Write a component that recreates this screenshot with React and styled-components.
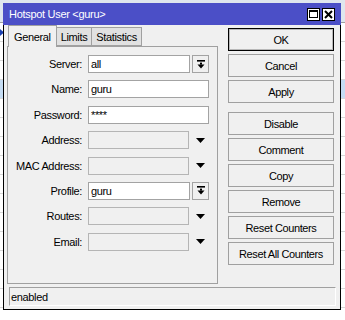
import styled, { createGlobalStyle } from "styled-components";

const GlobalStyle = createGlobalStyle`
  html, body {
    margin: 0;
    padding: 0;
    background: #f0f0f0;
  }
  body {
    font-family: "Liberation Sans", Arial, sans-serif;
    font-size: 11px;
    letter-spacing: -0.35px;
    color: #000;
  }
`;

const fields = [
  { label: "Server:", value: "all", kind: "combo" },
  { label: "Name:", value: "guru", kind: "text" },
  { label: "Password:", value: "****", kind: "text" },
  { label: "Address:", kind: "off" },
  { label: "MAC Address:", kind: "off" },
  { label: "Profile:", value: "guru", kind: "combo" },
  { label: "Routes:", kind: "off" },
  { label: "Email:", kind: "off" },
];

const buttons = [
  { text: "OK", main: true },
  { text: "Cancel" },
  { text: "Apply" },
  { text: "Disable", spaced: true },
  { text: "Comment" },
  { text: "Copy" },
  { text: "Remove" },
  { text: "Reset Counters" },
  { text: "Reset All Counters" },
];

function DropIcon() {
  return (
    <svg width="8" height="9" viewBox="0 0 8 9">
      <rect x="0" y="0" width="8" height="1.6" fill="#000" />
      <rect x="3" y="2.6" width="2" height="2" fill="#000" />
      <polygon points="0.5,4.4 7.5,4.4 4,8.4" fill="#000" />
    </svg>
  );
}

function ArrowIcon() {
  return (
    <svg width="9" height="5" viewBox="0 0 9 5">
      <polygon points="0,0 9,0 4.5,5" fill="#000" />
    </svg>
  );
}

function PointerIcon() {
  return (
    <svg width="4" height="7" viewBox="0 0 4 7">
      <polygon points="0,0 4,3.5 0,7" fill="#1a3fb0" />
    </svg>
  );
}

function MaxIcon() {
  return (
    <svg width="9" height="8" viewBox="0 0 9 8">
      <rect x="0.5" y="0.5" width="8" height="7" fill="none" stroke="#000" />
      <rect x="0" y="0" width="9" height="2" fill="#000" />
    </svg>
  );
}

function CloseIcon() {
  return (
    <svg width="9" height="9" viewBox="0 0 9 9">
      <path d="M1 1 L8 8 M8 1 L1 8" stroke="#000" strokeWidth="2" />
    </svg>
  );
}

export default function App() {
  return (
    <>
      <GlobalStyle />
      <Desktop>
        <BackList>
          <BackHeader />
          <BackRow><PointerIcon /></BackRow>
          <BackRow />
          <BackRow />
          <BackRow $selected />
          <BackRow />
          <BackRow />
          <BackRow />
          <BackRow />
          <BackRow />
          <BackRow />
          <BackRow />
          <BackRow />
          <BackRow />
          <BackRow />
          <BackRow />
        </BackList>

        <Window>
          <TitleBar>
            <Title>Hotspot User &lt;guru&gt;</Title>
            <TitleButtons>
              <TitleButton><MaxIcon /></TitleButton>
              <TitleButton><CloseIcon /></TitleButton>
            </TitleButtons>
          </TitleBar>

          <Body>
            <Main>
              <TabArea>
                <Tabs>
                  <Tab $active>General</Tab>
                  <Tab>Limits</Tab>
                  <Tab>Statistics</Tab>
                </Tabs>
                <Panel>
                  <Form>
                    {fields.map((f) => (
                      <FieldRow key={f.label}>
                        <Label>{f.label}</Label>
                        <Control>
                          <Input $off={f.kind === "off"}>{f.value}</Input>
                          {f.kind === "combo" && (
                            <DropButton><DropIcon /></DropButton>
                          )}
                          {f.kind === "off" && (
                            <ArrowSlot><ArrowIcon /></ArrowSlot>
                          )}
                        </Control>
                      </FieldRow>
                    ))}
                  </Form>
                </Panel>
              </TabArea>

              <ButtonColumn>
                {buttons.map((b) => (
                  <Button key={b.text} $main={b.main} $spaced={b.spaced}>
                    {b.text}
                  </Button>
                ))}
              </ButtonColumn>
            </Main>

            <StatusBar>enabled</StatusBar>
          </Body>
        </Window>
      </Desktop>
    </>
  );
}

const Desktop = styled.div`
  position: relative;
  width: 345px;
  height: 320px;
  overflow: hidden;
  background: #ffffff;
`;

const BackList = styled.div`
  display: flex;
  flex-direction: column;
`;

const BackHeader = styled.div`
  height: 22px;
  background: #dfe6ee;
  border-bottom: 1px solid #a0a0a0;
`;

const BackRow = styled.div`
  height: 18px;
  border-bottom: 1px solid #d8d8d8;
  background: ${(p) => (p.$selected ? "#c5dcf3" : "#ffffff")};
  display: flex;
  align-items: center;
`;

const Window = styled.div`
  position: absolute;
  left: 3px;
  top: 3px;
  width: 338px;
  display: flex;
  flex-direction: column;
`;

const TitleBar = styled.div`
  height: 22px;
  background: #4b4fc7;
  display: flex;
  align-items: center;
  justify-content: space-between;
  padding: 0 6px;
`;

const Title = styled.span`
  color: #ffffff;
  font-size: 11px;
  letter-spacing: -0.3px;
`;

const TitleButtons = styled.div`
  display: flex;
  gap: 2px;
`;

const TitleButton = styled.div`
  width: 13px;
  height: 13px;
  box-sizing: border-box;
  background: #ffffff;
  border: 1px solid #000;
  display: flex;
  align-items: center;
  justify-content: center;
`;

const Body = styled.div`
  background: #f0f0f0;
  border: 1px solid #000;
  border-top: none;
  padding: 0 2px 3px 3px;
  display: flex;
  flex-direction: column;
  gap: 3px;
`;

const Main = styled.div`
  display: flex;
  gap: 10px;
  align-items: flex-start;
`;

const TabArea = styled.div`
  width: 211px;
  display: flex;
  flex-direction: column;
`;

const Tabs = styled.div`
  height: 21px;
  display: flex;
  align-items: flex-end;
  padding-left: 1px;
  position: relative;
  z-index: 1;
`;

const Tab = styled.div`
  box-sizing: border-box;
  height: ${(p) => (p.$active ? "22px" : "19px")};
  margin-bottom: ${(p) => (p.$active ? "-1px" : "0")};
  padding: 0 ${(p) => (p.$active ? "5px" : "4px")};
  background: ${(p) => (p.$active ? "#f0f0f0" : "#e1e1e1")};
  border: 1px solid #a0a0a0;
  border-bottom: ${(p) => (p.$active ? "none" : "1px solid #a0a0a0")};
  border-left: ${(p) => (p.$active ? "1px solid #a0a0a0" : "none")};
  display: flex;
  align-items: center;
  font-size: 11px;
  &:first-child {
    border-left: 1px solid #a0a0a0;
  }
`;

const Panel = styled.div`
  box-sizing: border-box;
  height: 238px;
  border: 1px solid #a0a0a0;
  padding-top: 8px;
`;

const Form = styled.div`
  display: flex;
  flex-direction: column;
  gap: 7.4px;
`;

const FieldRow = styled.div`
  display: grid;
  grid-template-columns: 74px 121px;
  column-gap: 6px;
  align-items: center;
  height: 18px;
`;

const Label = styled.span`
  text-align: right;
  white-space: nowrap;
`;

const Control = styled.div`
  display: flex;
  gap: 2px;
  height: 18px;
`;

const Input = styled.div`
  flex: 1;
  box-sizing: border-box;
  height: 18px;
  border: 1px solid ${(p) => (p.$off ? "#b5b5b5" : "#a3a3a3")};
  background: ${(p) => (p.$off ? "#f0f0f0" : "#ffffff")};
  padding-left: 2px;
  line-height: 16px;
`;

const DropButton = styled.div`
  width: 17px;
  box-sizing: border-box;
  border: 1px solid #a3a3a3;
  background: #f0f0f0;
  display: flex;
  align-items: center;
  justify-content: center;
`;

const ArrowSlot = styled.div`
  width: 17px;
  display: flex;
  align-items: center;
  justify-content: center;
  padding-left: 1px;
`;

const ButtonColumn = styled.div`
  width: 106px;
  padding-top: 3px;
  display: flex;
  flex-direction: column;
  gap: 3px;
`;

const Button = styled.div`
  box-sizing: border-box;
  height: 23px;
  margin-top: ${(p) => (p.$spaced ? "6px" : "0")};
  border: 1px solid ${(p) => (p.$main ? "#000" : "#a0a0a0")};
  box-shadow: ${(p) => (p.$main ? "inset 0 0 0 1px #b8b8b8" : "none")};
  background: #f0f0f0;
  display: flex;
  align-items: center;
  justify-content: center;
  font-size: 11px;
  letter-spacing: -0.4px;
`;

const StatusBar = styled.div`
  box-sizing: border-box;
  height: 19px;
  margin: 0 2px 0 2px;
  border-top: 1px solid #a0a0a0;
  border-left: 1px solid #a0a0a0;
  border-right: 1px solid #ffffff;
  border-bottom: 1px solid #ffffff;
  padding-left: 1px;
  display: flex;
  align-items: center;
`;
